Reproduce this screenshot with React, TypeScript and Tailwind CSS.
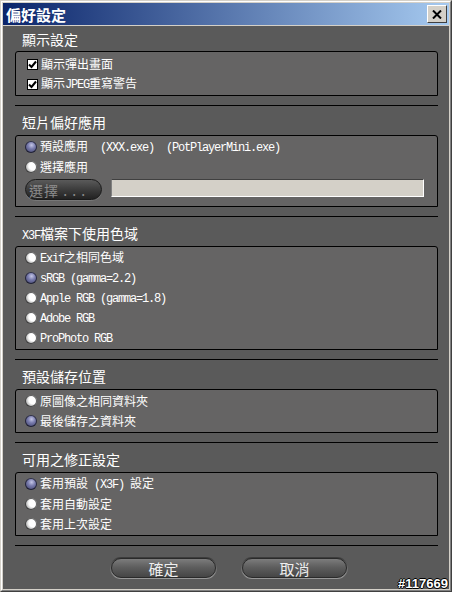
import type { ReactNode } from "react";

// latin runs in the dialog are narrow, monospaced
const mono = "font-['Liberation_Mono',monospace] text-[12px] tracking-[-1.2px]";

const Radio = ({ on }: { on?: boolean }) => (
    <span
        className={
            "inline-block w-[12px] h-[12px] rounded-full shrink-0 shadow-[inset_0_0_0_1px_rgba(0,0,0,0.6)] " +
            (on
                ? "bg-[radial-gradient(circle_at_55%_35%,#c4c6e6_0%,#7a7dae_35%,#4a4c78_75%,#1c1c2c_100%)]"
                : "bg-[radial-gradient(circle_at_64%_42%,#ffffff_0%,#ffffff_36%,#c0c0c0_60%,#303030_100%)]")
        }
    />
);

const Check = () => (
    <span className="inline-flex w-[11px] h-[11px] bg-white border border-black items-center justify-center shrink-0">
        <svg width="9" height="9" viewBox="0 0 9 9">
            <path d="M1 4.5 L3.5 7 L8 1.5" stroke="#000" strokeWidth="2" fill="none" />
        </svg>
    </span>
);

const Row = ({ icon, children }: { icon: ReactNode; children: ReactNode }) => (
    <div className="h-[20px] flex items-center gap-[3px] text-[12px] leading-[14px] text-white whitespace-pre">
        {icon}
        <span>{children}</span>
    </div>
);

const Section = ({ title, children, first }: { title: ReactNode; children: ReactNode; first?: boolean }) => (
    <>
        <div
            className={
                "pl-[7px] text-[14px] leading-[16px] text-white " + (first ? "h-[25px] pt-[5px]" : "h-[29px] pt-[8px]")
            }
        >
            {title}
        </div>
        <div className="border border-black rounded-t-[3px] bg-[#656464] pl-[9px] py-[1px]">{children}</div>
        <div className="h-[9px]" />
        <div className="h-px bg-black" />
    </>
);

const PillButton = ({ label }: { label: string }) => (
    <div className="w-[107px] h-[22px] rounded-full p-[1px] bg-[linear-gradient(to_bottom,#3a3a3a,#9a9a9a)]">
        <div className="w-full h-full rounded-full border border-[#2a2a2a] bg-[linear-gradient(to_bottom,#7c7c7c_0%,#5e5e5e_45%,#454545_100%)] flex items-center justify-center text-[15px] leading-none text-[#eeeeee]">
            {label}
        </div>
    </div>
);

export default function App() {
    return (
        <div className="w-[452px] h-[592px] relative border border-t-[#d4d0c8] border-l-[#d4d0c8] border-r-[#404040] border-b-[#404040] font-['Noto_Sans_CJK_TC','Liberation_Sans',sans-serif]">
            <div className="w-full h-full border border-t-white border-l-white border-r-[#808080] border-b-[#808080] bg-[#d4d0c8] p-[1px] flex flex-col">
                {/* title bar */}
                <div className="h-[22px] shrink-0 flex items-center justify-between pl-[3px] pr-[2px] bg-[linear-gradient(to_right,#0a246a,#a6caf0)]">
                    <span className="text-white text-[15px] font-bold leading-none">偏好設定</span>
                    <div className="w-[20px] h-[18px] bg-[#d4d0c8] border border-t-white border-l-white border-r-[#404040] border-b-[#404040] flex items-center justify-center">
                        <svg width="10" height="9" viewBox="0 0 10 9">
                            <path d="M1 0.5 L9 8.5 M9 0.5 L1 8.5" stroke="#000" strokeWidth="2" />
                        </svg>
                    </div>
                </div>

                <div className="mt-[1px] flex-1 bg-[#5a5a5a] pl-[12px] pr-[11px] flex flex-col">
                    <Section title="顯示設定" first>
                        <div className="pl-[2px] pt-[1px]">
                            <Row icon={<Check />}>顯示彈出畫面</Row>
                            <Row icon={<Check />}>
                                顯示<span className={mono}>JPEG</span>重寫警告
                            </Row>
                        </div>
                    </Section>

                    <Section title="短片偏好應用">
                        <Row icon={<Radio on />}>
                            預設應用<span className={mono}>  (XXX.exe)  (PotPlayerMini.exe)</span>
                        </Row>
                        <Row icon={<Radio />}>選擇應用</Row>
                        <div className="flex items-start gap-[9px] mt-[2px] mb-[5px]">
                            <div className="w-[77px] h-[21px] rounded-full bg-[linear-gradient(to_bottom,#5a5a5a_0%,#3c3c3c_50%,#222222_100%)] border border-[#1a1a1a] shadow-[0_1px_0_#777] flex items-center pl-[3px] text-[14px] leading-none text-[#8c8c8c] tracking-[1px]">
                                選擇 . . .
                            </div>
                            <div className="w-[313px] h-[18px] bg-[#d4d0c8] border border-t-[#404040] border-l-[#808080] border-r-white border-b-white" />
                        </div>
                    </Section>

                    <Section
                        title={
                            <>
                                <span className={mono}>X3F</span>檔案下使用色域
                            </>
                        }
                    >
                        <Row icon={<Radio />}>
                            <span className={mono}>Exif</span>之相同色域
                        </Row>
                        <Row icon={<Radio on />}>
                            <span className={mono}>sRGB (gamma=2.2)</span>
                        </Row>
                        <Row icon={<Radio />}>
                            <span className={mono}>Apple RGB (gamma=1.8)</span>
                        </Row>
                        <Row icon={<Radio />}>
                            <span className={mono}>Adobe RGB</span>
                        </Row>
                        <Row icon={<Radio />}>
                            <span className={mono}>ProPhoto RGB</span>
                        </Row>
                    </Section>

                    <Section title="預設儲存位置">
                        <Row icon={<Radio />}>原圖像之相同資料夾</Row>
                        <Row icon={<Radio on />}>最後儲存之資料夾</Row>
                    </Section>

                    <Section title="可用之修正設定">
                        <Row icon={<Radio on />}>
                            套用預設<span className={mono}> (X3F) </span>設定
                        </Row>
                        <Row icon={<Radio />}>套用自動設定</Row>
                        <Row icon={<Radio />}>套用上次設定</Row>
                    </Section>

                    <div className="flex gap-[24px] pl-[95px] mt-[11px]">
                        <PillButton label="確定" />
                        <PillButton label="取消" />
                    </div>
                </div>
            </div>

            <span className="absolute right-[3px] bottom-[1px] text-[13px] font-bold leading-none text-white font-['Liberation_Sans',sans-serif] [text-shadow:1px_0_0_#000,-1px_0_0_#000,0_1px_0_#000,0_-1px_0_#000]">
                #117669
            </span>
        </div>
    );
}
